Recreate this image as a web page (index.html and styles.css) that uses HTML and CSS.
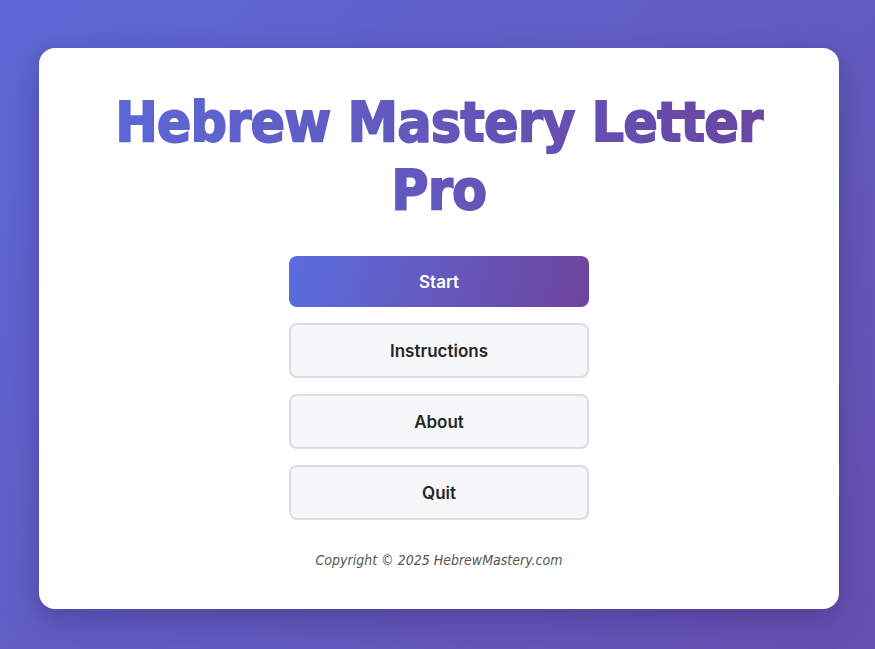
FILE: index.html
```html
<!DOCTYPE html>
<html lang="en">
<head>
<meta charset="utf-8">
<title>Hebrew Mastery Letter Pro</title>
<link rel="stylesheet" href="styles.css">
</head>
<body>
<div class="stage">
  <main class="card">
    <h1 class="title">Hebrew Mastery Letter Pro</h1>
    <nav class="menu">
      <button class="btn btn-primary">Start</button>
      <button class="btn btn-secondary">Instructions</button>
      <button class="btn btn-secondary">About</button>
      <button class="btn btn-secondary">Quit</button>
    </nav>
    <p class="footer">Copyright © 2025 HebrewMastery.com</p>
  </main>
</div>
</body>
</html>
```
FILE: styles.css
```css
html, body {
  margin: 0;
  height: 100%;
}
body {
  background: linear-gradient(135deg, #5d68d6 0%, #6650b0 100%);
  font-family: "DejaVu Sans Condensed", "DejaVu Sans", sans-serif;
}
.stage {
  box-sizing: border-box;
  height: 100%;
  padding: 48px 36px 40px 39px;
  display: flex;
}
.card {
  width: 800px;
  height: 561px;
  box-sizing: border-box;
  background: #fff;
  border-radius: 16px;
  box-shadow: 0 10px 30px rgba(40, 30, 90, 0.35);
  padding: 40px 40px;
  display: flex;
  flex-direction: column;
  align-items: center;
}
.title {
  margin: 0 0 32px;
  font-family: "DejaVu Sans Condensed", "DejaVu Sans", sans-serif;
  font-weight: bold;
  font-size: 56px;
  line-height: 68px;
  text-align: center;
  letter-spacing: -0.45px;
  background: linear-gradient(90deg, #5b69d7 0%, #6a44a0 100%);
  -webkit-background-clip: text;
  background-clip: text;
  color: transparent;
  -webkit-text-stroke: 2px rgba(0, 0, 0, 0);
}
.menu {
  display: flex;
  flex-direction: column;
  gap: 16px;
  width: 300px;
}
.btn {
  font-family: Inter, "Noto Sans", sans-serif;
  font-weight: 600;
  font-size: 17px;
  line-height: 21px;
  padding: 16px 10px 14px;
  border-radius: 8px;
  cursor: pointer;
  width: 100%;
}
.btn-primary {
  border: none;
  color: #fff;
  background: linear-gradient(105deg, #5a6ddf 0%, #6e449c 100%);
}
.btn-secondary {
  border: 2px solid #dadde2;
  background: #f6f7f9;
  color: #262626;
}
.footer {
  margin: 32px 0 0;
  font-style: italic;
  font-size: 14px;
  color: #555;
}
```
